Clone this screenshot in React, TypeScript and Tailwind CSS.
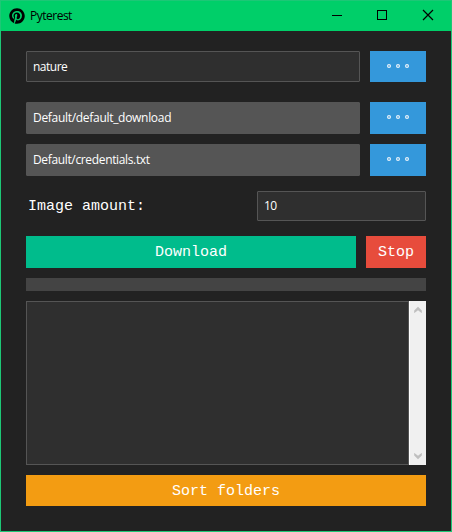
import React from "react";
import { FaPinterest } from "react-icons/fa";

const ui = "font-['Open_Sans','Noto_Sans',sans-serif] text-[12px]";
const mono = "font-['Courier_New','Liberation_Mono',monospace] text-[15px]";

function BrowseButton() {
  return (
    <button className="flex w-14 items-center justify-center gap-[5px] bg-[#3498db] pb-[2px]" aria-label="Browse">
      {[0, 1, 2].map((i) => (
        <span key={i} className="h-1 w-1 rounded-[1.5px] border border-[#f0f7fc] bg-[#8fc5ea]" />
      ))}
    </button>
  );
}

function PathRow({ value, className, tracking }: { value: string; className: string; tracking: string }) {
  return (
    <div className={`flex gap-2.5 ${className}`}>
      <div className={`flex flex-1 items-center rounded-[1px] border border-[#555] px-1.5 text-white ${ui}`}>
        <span className={tracking}>{value}</span>
      </div>
      <BrowseButton />
    </div>
  );
}

export default function App() {
  return (
    <div className="flex h-[532px] w-[452px] flex-col border border-[#1dc776] bg-[#222]">
      <header className="flex h-[30px] shrink-0 items-center bg-[#00cf69] pl-2 text-black">
        <FaPinterest className="size-4" />
        <span className={`ml-[5px] tracking-[-0.5px] ${ui}`}>Pyterest</span>
        <div className="ml-auto flex h-full">
          <svg width="137" height="30" viewBox="0 0 137 30" fill="none" stroke="black" shapeRendering="crispEdges">
            <path d="M18 14.5h10" />
            <rect x="63.5" y="9.5" width="9" height="9" />
            <path d="M109 9l10 10M119 9l-10 10" strokeWidth="1.2" shapeRendering="auto" />
          </svg>
        </div>
      </header>

      <main className="flex flex-1 flex-col px-[25px] pt-5">
        <PathRow value="nature" className="h-[31px] [&>div]:bg-[#2f2f2f] [&>div]:pt-px" tracking="tracking-[-0.5px]" />
        <PathRow value="Default/default_download" className="mt-5 h-8 [&>div]:bg-[#555]" tracking="tracking-[-0.3px]" />
        <PathRow value="Default/credentials.txt" className="mt-2.5 h-8 [&>div]:bg-[#555]" tracking="tracking-[-0.35px]" />

        <div className="mt-[15px] flex h-[30px] items-center justify-between">
          <label className={`pl-[2px] pt-[3px] text-white ${mono}`}>Image amount:</label>
          <div className={`flex h-full w-[169px] items-center rounded-[1px] border border-[#555] bg-[#2f2f2f] px-1.5 text-white ${ui}`}>
            <span className="tracking-[-0.6px]">10</span>
          </div>
        </div>

        <div className="mt-[15px] flex h-8 gap-2.5">
          <button className={`flex-1 bg-[#00bc8c] pt-[2px] text-white ${mono}`}>Download</button>
          <button className={`w-[60px] bg-[#e74c3c] pt-[2px] text-white ${mono}`}>Stop</button>
        </div>

        <div className="mt-2.5 h-[13px] bg-[#444]" />

        <div className="mt-2.5 flex h-[164px]">
          <div className="flex-1 border border-[#555] bg-[#2f2f2f]" />
          <div className="flex w-[17px] flex-col items-center justify-between border-l border-white bg-[#f0f0f0] py-[5px]">
            <svg width="8" height="7" viewBox="0 0 8 7" fill="#bfbfbf">
              <path d="M4 .8L7.8 4.5V7.2L4 4.2L.2 7.2V4.5Z" />
            </svg>
            <svg width="8" height="7" viewBox="0 0 8 7" fill="#bfbfbf">
              <path d="M4 6.2L7.8 2.5V-.2L4 2.8L.2-.2V2.5Z" />
            </svg>
          </div>
        </div>

        <button className={`mt-2.5 h-[31px] bg-[#f39c12] pt-[3px] text-white ${mono}`}>Sort folders</button>
      </main>
    </div>
  );
}
